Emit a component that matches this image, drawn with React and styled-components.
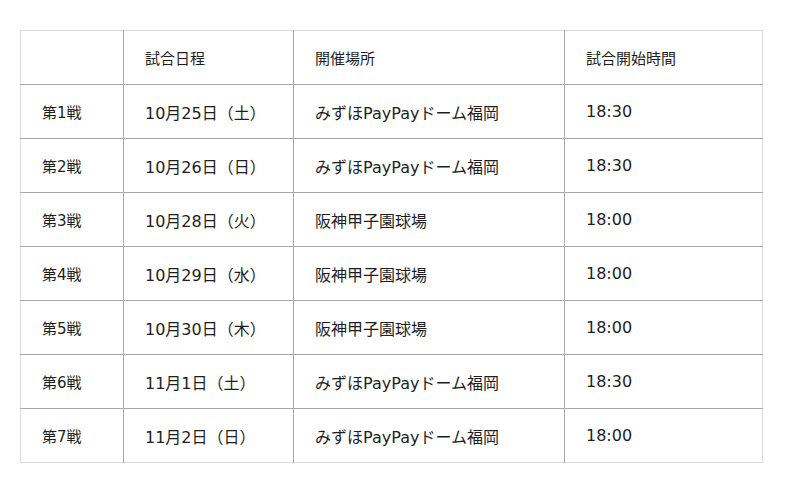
import React from "react";
import styled, { createGlobalStyle } from "styled-components";

const GlobalStyle = createGlobalStyle`
  html, body {
    margin: 0;
    padding: 0;
    background: #fff;
  }
  body {
    font-family: "DejaVu Sans", "Noto Sans CJK JP", sans-serif;
    color: #1e1e1e;
  }
`;

const Page = styled.div`
  padding: 30px 0 0 20px;
`;

const Table = styled.table`
  border-collapse: collapse;
  border: 1px solid #dcdcdc;
  table-layout: fixed;
  width: 742px;

  tbody tr > * {
    border-top: 1px solid #a8a8a8;
  }
`;

const Row = styled.tr`
  height: 54px;
`;

const Cell = styled.td`
  padding: 0 21px;
  font-size: 16px;
  font-weight: normal;
  text-align: left;
  vertical-align: middle;
  white-space: nowrap;
  box-sizing: border-box;

  & + & {
    border-left: 1px solid #a8a8a8;
  }
`;

const HeadCell = styled(Cell).attrs({ as: "th" })`
  font-size: 15px;
`;

const LabelCell = styled(Cell)`
  font-size: 15px;
`;

const columns = [103, 170, 271, 198];

const games = [
  ["第1戦", "10月25日（土）", "みずほPayPayドーム福岡", "18:30"],
  ["第2戦", "10月26日（日）", "みずほPayPayドーム福岡", "18:30"],
  ["第3戦", "10月28日（火）", "阪神甲子園球場", "18:00"],
  ["第4戦", "10月29日（水）", "阪神甲子園球場", "18:00"],
  ["第5戦", "10月30日（木）", "阪神甲子園球場", "18:00"],
  ["第6戦", "11月1日（土）", "みずほPayPayドーム福岡", "18:30"],
  ["第7戦", "11月2日（日）", "みずほPayPayドーム福岡", "18:00"],
];

export default function App() {
  return (
    <Page>
      <GlobalStyle />
      <Table>
        <colgroup>
          {columns.map((w, i) => (
            <col key={i} style={{ width: w }} />
          ))}
        </colgroup>
        <thead>
          <Row>
            <HeadCell />
            <HeadCell>試合日程</HeadCell>
            <HeadCell>開催場所</HeadCell>
            <HeadCell>試合開始時間</HeadCell>
          </Row>
        </thead>
        <tbody>
          {games.map((g) => (
            <Row key={g[0]}>
              <LabelCell>{g[0]}</LabelCell>
              <Cell>{g[1]}</Cell>
              <Cell>{g[2]}</Cell>
              <Cell>{g[3]}</Cell>
            </Row>
          ))}
        </tbody>
      </Table>
    </Page>
  );
}
